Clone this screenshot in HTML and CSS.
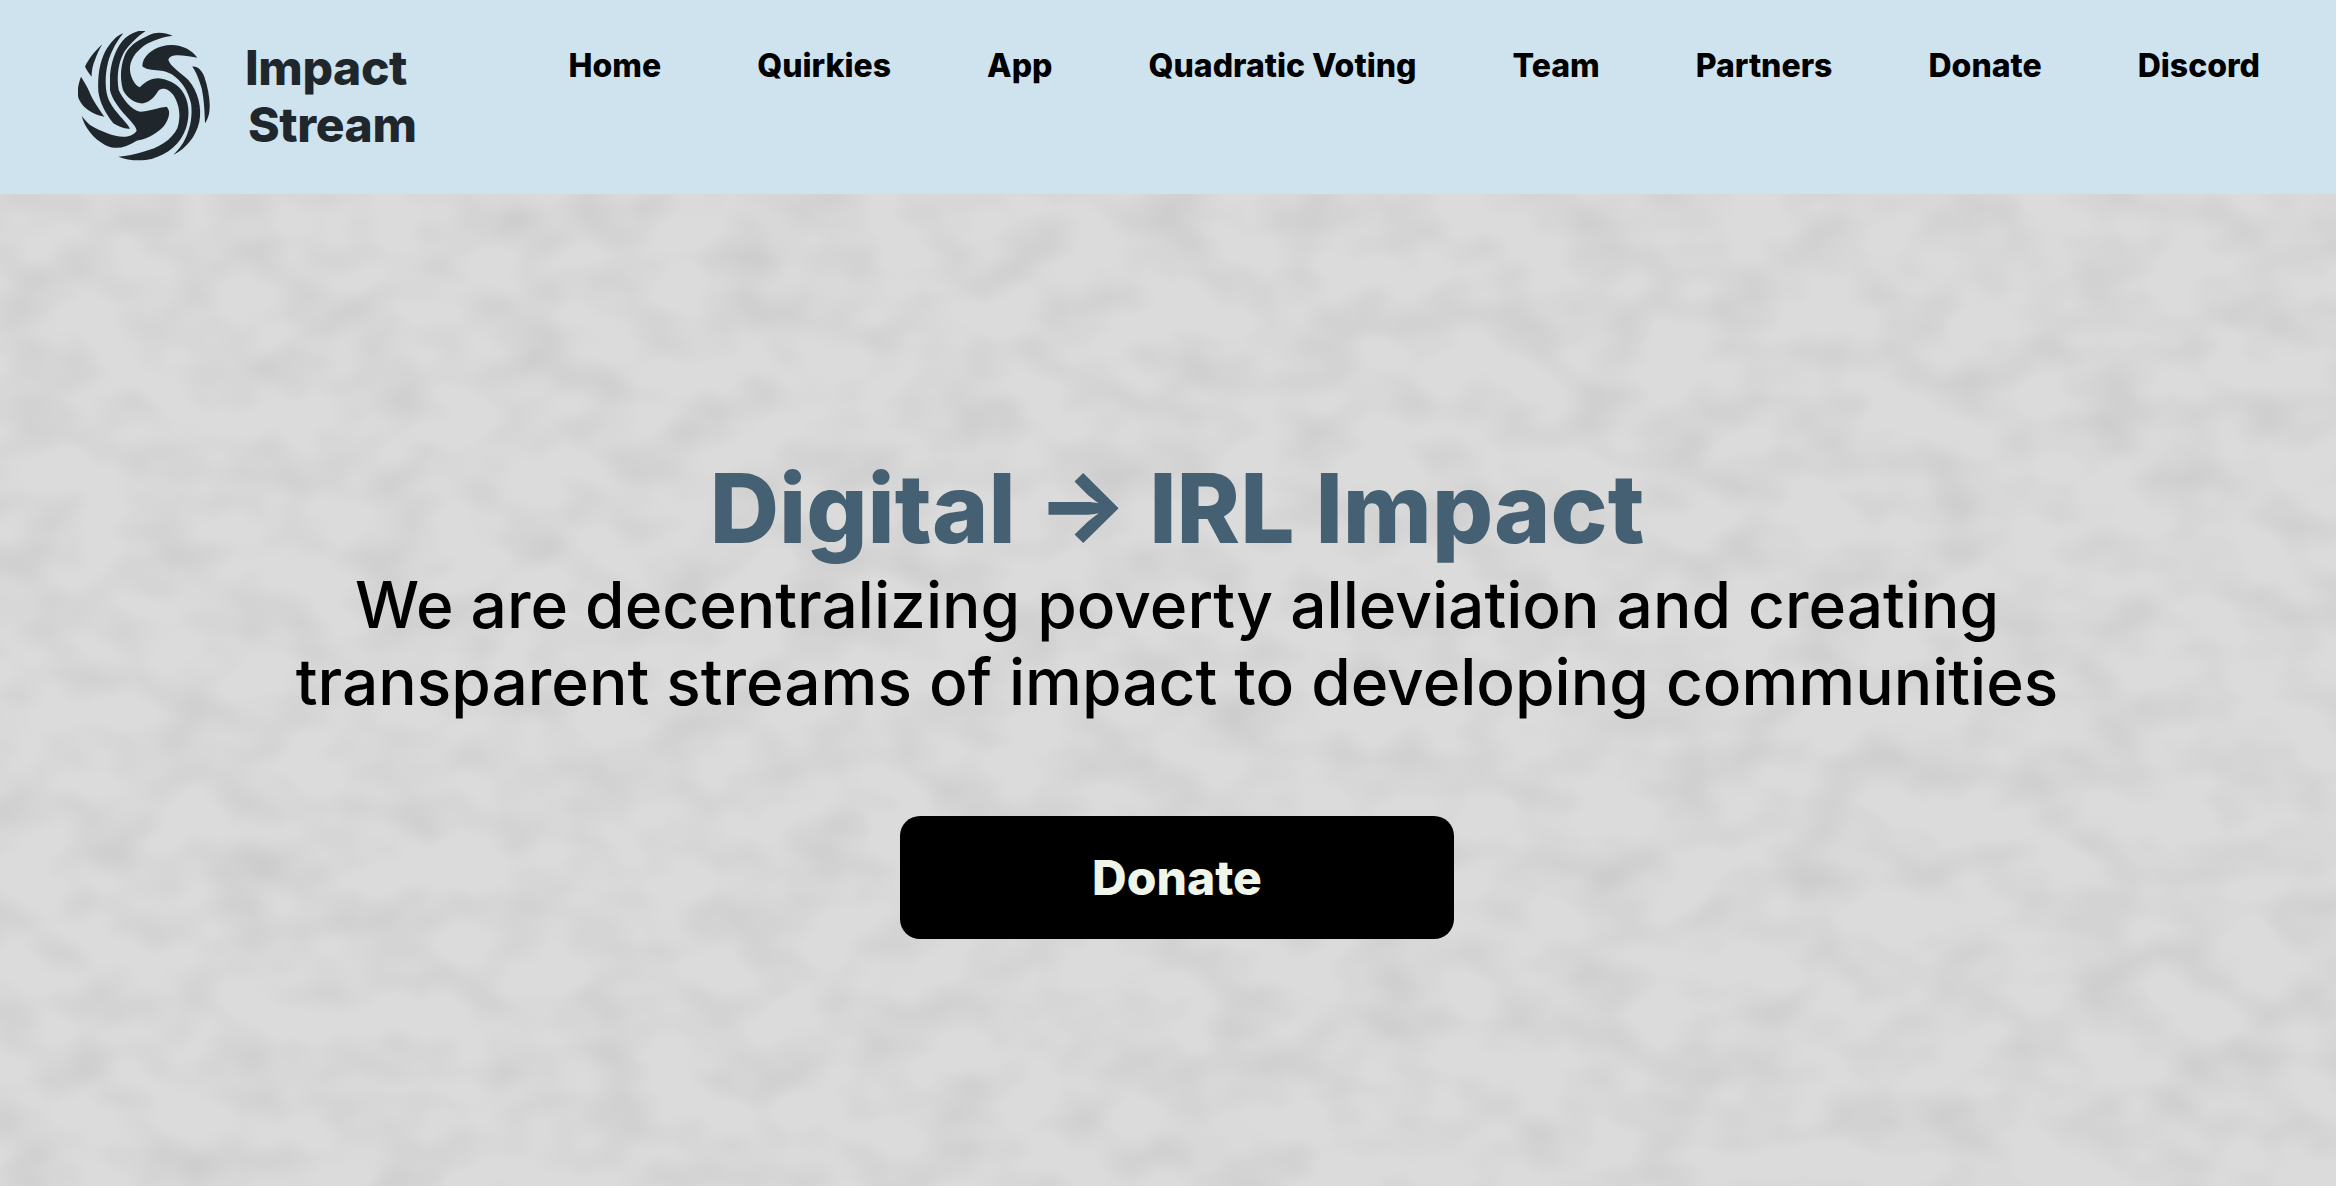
FILE: index.html
```html
<!DOCTYPE html>
<html lang="en">
<head>
<meta charset="utf-8">
<title>Impact Stream</title>
<link rel="stylesheet" href="styles.css">
</head>
<body>
<header class="site-header">
  <a class="brand" href="#">
    <svg class="brand-logo" viewBox="54 33 396 396" aria-hidden="true">
      <g fill="#20272c">
        <path d="M412 113C395 90 370 76 335 75C295 75 265 95 252 118C248 128 246 134 248 140C262 150 285 150 305 152C345 158 380 195 393 250C398 285 392 320 378 352C368 375 352 393 340 405C378 385 408 350 418 305C426 265 415 215 385 180C362 158 332 140 325 120C330 100 365 105 412 113Z"/>
        <path d="M397 140C412 138 425 150 433 170C445 205 452 245 448 275C446 290 441 300 435 310C434 280 433 245 425 205C418 180 408 155 397 140Z"/>
        <path d="M338 47C315 38 290 33 268 45C240 58 212 72 197 100C183 130 178 170 189 210C199 232 225 252 250 250C272 245 285 228 295 212C310 200 328 208 342 228C358 255 364 290 352 325C335 360 295 385 250 395C225 402 200 408 175 410C200 420 240 425 275 417C325 402 362 372 378 325C392 282 386 240 366 212C350 190 322 178 295 175C270 175 250 190 240 202C222 195 208 165 210 140C214 110 235 88 260 72C285 58 315 50 338 47Z"/>
        <path d="M262 30C235 30 215 38 195 55C172 78 155 115 150 165C150 190 150 200 150 210C155 235 175 265 212 303C222 315 228 322 230 332C222 345 205 350 190 350C160 350 125 335 90 315C80 305 72 298 65 288C75 325 100 355 135 375C165 390 195 385 230 362C255 358 285 345 310 320C325 300 335 275 320 260C295 262 265 275 240 275C215 270 190 240 176 210C170 175 173 130 193 95C208 75 235 45 262 30Z"/>
        <path d="M190 40C170 45 150 70 135 95C120 125 112 165 115 215C120 245 130 270 160 310C175 320 195 328 210 326C205 315 185 295 165 270C148 248 140 230 138 205C134 165 142 120 158 90C166 72 178 55 190 40Z"/>
        <path d="M63 170C52 200 50 225 58 240C70 265 100 285 133 290C120 270 100 245 88 215C82 200 72 185 63 170Z"/>
        <path d="M127 73C105 92 85 118 75 140C80 150 88 162 95 170C95 150 100 130 105 120C110 105 118 88 127 73Z"/>
      </g>
    </svg>
    <span class="brand-name"><span class="brand-line">Impact</span><span class="brand-line brand-line-2">Stream</span></span>
  </a>
  <nav class="main-nav">
    <a href="#">Home</a>
    <a href="#">Quirkies</a>
    <a href="#">App</a>
    <a href="#">Quadratic Voting</a>
    <a href="#">Team</a>
    <a href="#">Partners</a>
    <a href="#">Donate</a>
    <a href="#">Discord</a>
  </nav>
</header>
<main class="hero">
  <svg class="hero-texture" width="100%" height="100%" aria-hidden="true">
    <filter id="grain" x="0" y="0" width="100%" height="100%">
      <feTurbulence type="fractalNoise" baseFrequency="0.014 0.02" numOctaves="2" seed="7"/>
      <feColorMatrix type="matrix" values="0 0 0 0 0  0 0 0 0 0  0 0 0 0 0  0.13 0 0 0 -0.05"/>
    </filter>
    <rect width="100%" height="100%" filter="url(#grain)"/>
  </svg>
  <div class="hero-content">
    <h1 class="hero-title">Digital → IRL Impact</h1>
    <p class="hero-sub">We are decentralizing poverty alleviation and creating transparent streams of impact to developing communities</p>
    <a class="hero-button" href="#">Donate</a>
  </div>
</main>
</body>
</html>
```
FILE: styles.css
```css
* { box-sizing: border-box; }
html, body { margin: 0; height: 100%; }
body {
  font-family: Inter, "Liberation Sans", sans-serif;
  background: #dbdbdb;
  overflow: hidden;
  display: flex;
  flex-direction: column;
}
a { text-decoration: none; color: inherit; }
.site-header {
  height: 194px;
  flex: none;
  background: #cfe3ef;
  display: flex;
  justify-content: space-between;
  padding: 0 76px 0 78px;
}
.brand {
  display: flex;
  align-items: center;
  gap: 35px;
  color: #20272c;
}
.brand-logo { width: 132px; height: 132px; display: block; }
.brand-name {
  display: flex;
  flex-direction: column;
  padding-bottom: 2px;
  font-size: 48px;
  font-weight: 800;
  letter-spacing: -0.4px;
  line-height: 57px;
}
.brand-line-2 { padding-left: 3px; }
.main-nav {
  display: flex;
  gap: 96px;
  padding-top: 46px;
  font-size: 32px;
  font-weight: 800;
  line-height: 40px;
  color: #000;
}
.hero {
  flex: 1;
  position: relative;
  display: flex;
  justify-content: center;
  padding: 256px 0 0 18px;
}
.hero-texture { position: absolute; inset: 0; }
.hero-content {
  position: relative;
  width: 1800px;
  display: flex;
  flex-direction: column;
  align-items: center;
  text-align: center;
}
.hero-title {
  margin: 0;
  font-size: 96px;
  font-weight: 800;
  line-height: 116px;
  color: #456072;
}
.hero-sub {
  margin: 0;
  font-size: 64px;
  font-weight: 500;
  line-height: 77px;
  color: #000;
}
.hero-button {
  margin-top: 96px;
  width: 554px;
  height: 123px;
  border-radius: 20px;
  background: #000;
  color: #f0f5ea;
  font-size: 48px;
  font-weight: 800;
  display: flex;
  align-items: center;
  justify-content: center;
}
```
